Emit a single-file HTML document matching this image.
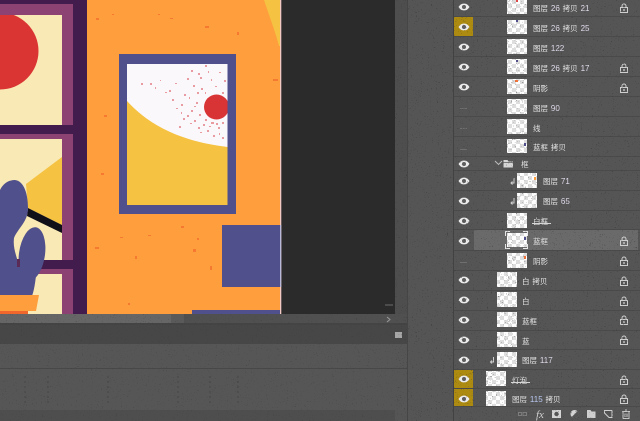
<!DOCTYPE html>
<html lang="zh"><head><meta charset="utf-8"><title>Layers</title>
<style>
html,body{margin:0;padding:0;background:#545454;width:640px;height:421px;overflow:hidden}
svg{display:block}
text{font-family:"Liberation Sans","Noto Sans CJK SC",sans-serif;font-size:7.500px;fill:#e6e6e6;word-spacing:.8px}
.n{font-size:8px;fill:#e2dcec}
</style></head><body>
<svg width="640" height="421" viewBox="0 0 640 421" xmlns="http://www.w3.org/2000/svg">
<defs>
<pattern id="ck" width="8" height="8" patternUnits="userSpaceOnUse">
<rect width="8" height="8" fill="#fff"/><rect width="4" height="4" fill="#dedede"/><rect x="4" y="4" width="4" height="4" fill="#dedede"/>
</pattern>
<filter id="sp" x="0" y="0" width="100%" height="100%" color-interpolation-filters="sRGB">
<feTurbulence type="fractalNoise" baseFrequency="0.8" numOctaves="2" seed="7"/>
<feColorMatrix values="0 0 0 0 0.22  0 0 0 0 0.22  0 0 0 0 0.22  10 10 0 0 -12.500"/>
</filter>
<clipPath id="win"><rect x="0" y="0" width="87" height="314"/></clipPath>
<clipPath id="pic"><rect x="127" y="64" width="100.500" height="141"/></clipPath>
<symbol id="eye" viewBox="0 0 12 8" overflow="visible">
<path d="M0.500 4C2.500 1 4 .6 6 .6S9.500 1 11.500 4C9.500 7 8 7.400 6 7.400S2.500 7 .5 4Z" fill="#ececec"/>
<circle cx="6" cy="4" r="2" fill="#5e5e5e"/>
</symbol>
<symbol id="lock" viewBox="0 0 8 10" overflow="visible">
<path d="M2 4.500V3a2 2 0 0 1 4 0V4.500" fill="none" stroke="#cfcfcf" stroke-width="1"/>
<rect x=".5" y="4.500" width="7" height="5" fill="none" stroke="#cfcfcf"/>
<rect x="3.200" y="6.200" width="1.600" height="1.600" fill="#cfcfcf"/>
</symbol>
</defs>

<!-- workspace backgrounds -->
<rect width="640" height="421" fill="#555555"/>
<rect x="281" y="0" width="114" height="314" fill="#2b2b2b"/>
<rect x="395" y="0" width="12" height="325" fill="#4e4e4e"/>
<rect x="0" y="314" width="407" height="11" fill="#505050"/>
<rect x="0" y="314" width="171" height="9" fill="#666666"/>
<rect x="171" y="314" width="13" height="9" fill="#5a5a5a"/>
<rect x="0" y="323" width="407" height="2" fill="#444444"/>
<rect x="0" y="325" width="407" height="19" fill="#474747"/>
<rect x="0" y="344" width="407" height="66" fill="#565656"/>
<rect x="0" y="368" width="407" height="1" fill="#484848"/>
<rect x="0" y="410" width="395" height="11" fill="#4e4e4e"/>
<rect x="407" y="0" width="1" height="421" fill="#464646"/>
<rect x="453" y="0" width="1" height="421" fill="#424242"/>

<!-- canvas -->
<rect x="87" y="0" width="193" height="314" fill="#ff9e3d"/>
<rect x="280" y="0" width="1.300" height="314" fill="#f3c9c3"/>
<rect x="280" y="225" width="1.300" height="62" fill="#b9b8d8"/>
<path d="M264 0C270 18 276 34 279 46H280V0Z" fill="#f5c242"/>

<!-- window -->
<g clip-path="url(#win)">
<rect width="87" height="314" fill="#421c4c"/>
<rect x="0" y="4" width="73" height="121" fill="#8c4272"/>
<rect x="0" y="134" width="73" height="180" fill="#8c4272"/>
<rect x="0" y="15" width="62" height="110" fill="#f9e9b4"/>
<rect x="0" y="139" width="62" height="175" fill="#f9e9b4"/>
<circle cx="0" cy="51" r="38.500" fill="#db3533"/>
<rect x="0" y="4" width="62" height="11" fill="#8c4272"/>
<path d="M62 157L26 184L28 208L62 225Z" fill="#f5c242"/>
<path d="M28 208L62 225V233L27 216Z" fill="#111018"/>
<rect x="36" y="260" width="37" height="9" fill="#421c4c"/>
<rect x="36" y="269" width="26" height="5" fill="#8c4272"/>
<path d="M0 190C4 182 10 180 15 180C24 181 28 194 28 208C28 222 18 228 14 238C13 246 15 252 18 262L37 266C36 276 35 288 32 296H0Z" fill="#50508c"/>
<ellipse cx="32" cy="254" rx="13" ry="27" transform="rotate(8 32 254)" fill="#50508c"/>
<rect x="17" y="259" width="3" height="8" fill="#5b2b58"/>
<path d="M0 295H39L36 311H0Z" fill="#ff9e3d"/>
<rect x="0" y="311" width="28" height="3" fill="#f1662b"/>
</g>

<!-- orange speckles -->
<g fill="#f26d2e" opacity=".75">
<rect x="96" y="18" width="3" height="2"/><rect x="205" y="26" width="4" height="2"/><rect x="237" y="32" width="2" height="3"/>
<rect x="112" y="14" width="2" height="1"/><rect x="158" y="14" width="2" height="1"/><rect x="273" y="79" width="5" height="2"/>
<rect x="104" y="115" width="3" height="2"/><rect x="101" y="173" width="3" height="2"/><rect x="95" y="247" width="4" height="2"/>
<rect x="135" y="256" width="2" height="3"/><rect x="193" y="249" width="3" height="3"/><rect x="210" y="266" width="2" height="4"/>
<rect x="181" y="226" width="3" height="2"/><rect x="197" y="238" width="2" height="2"/><rect x="128" y="303" width="2" height="2"/>
<rect x="120" y="237" width="3" height="1"/><rect x="148" y="235" width="3" height="1"/><rect x="170" y="18" width="3" height="1"/>
</g>

<!-- picture frame -->
<rect x="119" y="54" width="117" height="160" fill="#50508c"/>
<g clip-path="url(#pic)">
<rect x="127" y="64" width="101" height="141" fill="#fbf8fb"/>
<g fill="#e4868c" opacity=".8">
<rect x="205" y="65" width="2" height="2"/><rect x="191" y="70" width="2" height="2"/><rect x="219" y="72" width="2" height="1"/><rect x="200" y="77" width="2" height="2"/><rect x="211" y="79" width="1" height="2"/><rect x="141" y="83" width="2" height="2"/><rect x="150" y="83" width="2" height="2"/><rect x="169" y="90" width="2" height="2"/><rect x="193" y="85" width="2" height="2"/><rect x="187" y="78" width="2" height="2"/><rect x="197" y="92" width="2" height="2"/><rect x="224" y="80" width="2" height="2"/><rect x="181" y="104" width="2" height="2"/><rect x="172" y="99" width="2" height="2"/><rect x="165" y="92" width="2" height="1"/><rect x="155" y="87" width="1" height="2"/><rect x="194" y="120" width="2" height="2"/><rect x="203" y="124" width="2" height="2"/><rect x="211" y="122" width="3" height="2"/><rect x="218" y="127" width="2" height="2"/><rect x="207" y="130" width="2" height="2"/><rect x="213" y="135" width="2" height="2"/><rect x="200" y="132" width="2" height="1"/><rect x="187" y="115" width="2" height="2"/><rect x="179" y="126" width="2" height="2"/><rect x="191" y="110" width="2" height="2"/><rect x="222" y="137" width="2" height="2"/><rect x="196" y="102" width="2" height="2"/><rect x="181" y="112" width="1" height="2"/><rect x="222" y="92" width="2" height="2"/><rect x="205" y="92" width="1" height="2"/>
<rect x="198" y="73" width="2" height="2"/><rect x="184" y="94" width="2" height="2"/><rect x="189" y="97" width="1" height="2"/><rect x="208" y="71" width="1" height="2"/><rect x="215" y="86" width="2" height="1"/><rect x="201" y="88" width="2" height="2"/><rect x="190" y="123" width="2" height="1"/><rect x="198" y="127" width="2" height="2"/><rect x="205" y="119" width="2" height="2"/><rect x="216" y="123" width="2" height="2"/><rect x="222" y="122" width="2" height="2"/><rect x="209" y="126" width="2" height="1"/><rect x="219" y="133" width="1" height="2"/><rect x="176" y="108" width="2" height="1"/><rect x="183" y="118" width="2" height="2"/><rect x="160" y="80" width="1" height="1"/><rect x="175" y="83" width="2" height="1"/><rect x="205" y="110" width="1" height="1"/><rect x="199" y="114" width="2" height="2"/><rect x="194" y="106" width="2" height="1"/>
</g>
<circle cx="216.500" cy="107" r="12.500" fill="#d83435"/>
<path d="M127 101C146 122 176 141 228 147V205H127Z" fill="#f5c242"/>
</g>

<!-- blue blocks -->
<rect x="222" y="225" width="58" height="62" fill="#50508c"/>
<rect x="192" y="310" width="88" height="4" fill="#50508c"/>

<!-- canvas corner controls -->
<path d="M385 305h8" stroke="#6d6d6d"/>
<path d="M387 317l3 2.500-3 2.500" fill="none" stroke="#9a9a9a"/>
<rect x="395" y="332" width="7" height="6" fill="#a6a6a6"/>

<!-- highlighted eye boxes / selected row -->
<rect x="454" y="17" width="19" height="20" fill="#ad8a10"/>
<rect x="454" y="369" width="19" height="19" fill="#ad8a10"/>
<rect x="454" y="389" width="19" height="17" fill="#ad8a10"/>
<rect x="474" y="230" width="164" height="20" fill="#6a6a6a"/>

<!-- row lines -->
<g stroke="#4a4a4a" stroke-width="1">
<path d="M454 16.500H640M454 36.500H640M454 56.500H640M454 76.500H640M454 96.500H640M454 116.500H640M454 136.500H640M454 156.500H640M454 170.500H640M454 190.500H640M454 210.500H640M454 229.500H640M454 250.500H640M454 270.500H640M454 290.500H640M454 310.500H640M454 330.500H640M454 349.500H640M454 369.500H640M454 388.500H640M454 406.500H640"/>
</g>

<!-- thumbnails -->
<g fill="url(#ck)">
<rect x="507" y="0" width="20" height="14"/><rect x="507" y="20" width="20" height="14"/><rect x="507" y="39" width="20" height="15"/>
<rect x="507" y="59" width="20" height="15"/><rect x="507" y="79" width="20" height="15"/><rect x="507" y="99" width="20" height="15"/>
<rect x="507" y="119" width="20" height="15"/><rect x="507" y="139" width="20" height="14"/>
<rect x="517" y="173" width="20" height="15"/><rect x="517" y="193" width="20" height="15"/>
<rect x="507" y="213" width="20" height="15"/><rect x="507" y="233" width="20" height="14"/><rect x="507" y="253" width="20" height="15"/>
<rect x="497" y="272" width="20" height="15"/><rect x="497" y="292" width="20" height="15"/><rect x="497" y="312" width="20" height="15"/>
<rect x="497" y="332" width="20" height="15"/><rect x="497" y="352" width="20" height="15"/>
<rect x="486" y="371" width="20" height="15"/><rect x="486" y="391" width="20" height="15"/>
</g>
<rect x="516" y="0" width="2" height="2" fill="#e04a4a"/><rect x="516" y="20" width="2" height="2" fill="#50508c"/>
<rect x="516" y="60" width="2" height="2" fill="#50508c"/><rect x="515" y="80" width="3" height="2" fill="#f2743a"/>
<rect x="524" y="143" width="2" height="3" fill="#50508c"/><rect x="534" y="177" width="2" height="3" fill="#ff9e3d"/>
<rect x="524" y="237" width="2" height="3" fill="#50508c"/><rect x="524" y="256" width="2" height="3" fill="#f2743a"/>
<!-- selection corners -->
<path d="M505.500 236V231.500H510M523 231.500H527.500V236M527.500 244V248.500H523M510 248.500H505.500V244" fill="none" stroke="#e8e8e8"/>

<!-- eyes -->
<g>
<use href="#eye" x="458" y="3" width="12" height="8"/><use href="#eye" x="458" y="23" width="12" height="8"/>
<use href="#eye" x="458" y="43" width="12" height="8"/><use href="#eye" x="458" y="63" width="12" height="8"/>
<use href="#eye" x="458" y="83" width="12" height="8"/>
<use href="#eye" x="458" y="160" width="12" height="8"/><use href="#eye" x="458" y="177" width="12" height="8"/>
<use href="#eye" x="458" y="197" width="12" height="8"/><use href="#eye" x="458" y="217" width="12" height="8"/>
<use href="#eye" x="458" y="237" width="12" height="8"/><use href="#eye" x="458" y="276" width="12" height="8"/>
<use href="#eye" x="458" y="296" width="12" height="8"/><use href="#eye" x="458" y="316" width="12" height="8"/>
<use href="#eye" x="458" y="336" width="12" height="8"/><use href="#eye" x="458" y="356" width="12" height="8"/>
<use href="#eye" x="458" y="375" width="12" height="8"/><use href="#eye" x="458" y="395" width="12" height="8"/>
</g>
<path d="M460 108.500h7M460 128.500h7M460 149.500h7M460 262.500h7" stroke="#6f6f6f"/>

<!-- locks -->
<g>
<use href="#lock" x="620" y="3" width="8" height="10"/><use href="#lock" x="620" y="63" width="8" height="10"/>
<use href="#lock" x="620" y="83" width="8" height="10"/><use href="#lock" x="620" y="236" width="8" height="10"/>
<use href="#lock" x="620" y="256" width="8" height="10"/><use href="#lock" x="620" y="276" width="8" height="10"/>
<use href="#lock" x="620" y="296" width="8" height="10"/><use href="#lock" x="620" y="315" width="8" height="10"/>
<use href="#lock" x="620" y="335" width="8" height="10"/><use href="#lock" x="620" y="375" width="8" height="10"/>
<use href="#lock" x="620" y="394" width="8" height="10"/>
</g>

<!-- layer names -->
<text x="533" y="11">图层 <tspan class="n">26</tspan> 拷贝 <tspan class="n">21</tspan></text>
<text x="533" y="31">图层 <tspan class="n">26</tspan> 拷贝 <tspan class="n">25</tspan></text>
<text x="533" y="51">图层 <tspan class="n">122</tspan></text>
<text x="533" y="71">图层 <tspan class="n">26</tspan> 拷贝 <tspan class="n">17</tspan></text>
<text x="533" y="91">阴影</text>
<text x="533" y="111">图层 <tspan class="n">90</tspan></text>
<text x="533" y="131">线</text>
<text x="533" y="150">蓝框 拷贝</text>
<text x="521" y="167">框</text>
<text x="543" y="184">图层 <tspan class="n">71</tspan></text>
<text x="543" y="204">图层 <tspan class="n">65</tspan></text>
<text x="533" y="224">白框</text>
<path d="M532 223.500h19" stroke="#d6d6d6"/>
<text x="533" y="244">蓝框</text>
<text x="533" y="264">阴影</text>
<text x="522" y="284">白 拷贝</text>
<text x="522" y="304">白</text>
<text x="522" y="324">蓝框</text>
<text x="522" y="344">蓝</text>
<text x="522" y="363">图层 <tspan class="n">117</tspan></text>
<text x="512" y="383">灯泡</text>
<path d="M511 382.500h19" stroke="#d6d6d6"/>
<text x="512" y="402">图层 <tspan class="n" style="fill:#b9c8f0">115</tspan> 拷贝</text>

<!-- group chevron and folder -->
<path d="M495 161l3.500 3.500 3.500-3.500" fill="none" stroke="#bdbdbd"/>
<path d="M503.500 160h4l1 1.500h4.500v6h-9.500Z" fill="#d5d5d5"/>
<path d="M503.500 162.500h9.500" stroke="#7b7b7b"/>

<!-- clip arrows -->
<path d="M514 178v5h-2.500M512.500 181.500l-1.500 1.500 1.500 1.500M514 198v5h-2.500M512.500 201.500l-1.500 1.500 1.500 1.500M493.500 357v5h-2M492 360.500l-1.500 1.500 1.500 1.500" fill="none" stroke="#d0d0d0"/>

<!-- footer icons -->
<path d="M518.500 412.500h3v3h-3ZM523 412.500h3.500v3H523Z" fill="none" stroke="#7d7d7d"/>
<text x="536" y="418" style="font-family:'Liberation Serif',serif;font-style:italic;font-size:11px;fill:#d0d0d0">fx</text>
<rect x="552" y="410" width="9" height="8" fill="#d5d5d5"/><circle cx="556.500" cy="414" r="2.200" fill="#555"/>
<circle cx="574.500" cy="414" r="4" fill="#d5d5d5"/><path d="M577.400 411.200A4 4 0 0 1 571.700 417Z" fill="#555"/>
<path d="M587 410h3.500l1 1.500h4v6.500H587Z" fill="#cfcfcf"/>
<path d="M604.500 410.500h7.500v7h-3l-4.500-4.500Z" fill="none" stroke="#d0d0d0"/>
<path d="M622 411.500h8M623 412v6.500h6V412M625 410h2" fill="none" stroke="#c8c8c8"/>
<path d="M625 413.500v3.500M627 413.500v3.500" stroke="#c8c8c8"/>

<!-- dust marks in the lower panel -->
<path d="M25 376v30M48 376v30M108 376v30M178 376v30M210 376v30M238 376v30" fill="none" stroke="#454545" stroke-dasharray="2 3"/>

<!-- speckled texture over the grey chrome -->
<svg x="395" y="0" width="245" height="421"><rect width="245" height="421" filter="url(#sp)" opacity=".6"/></svg>
<svg x="0" y="314" width="395" height="107"><rect width="395" height="107" filter="url(#sp)" opacity=".4"/></svg>
</svg>
</body></html>
